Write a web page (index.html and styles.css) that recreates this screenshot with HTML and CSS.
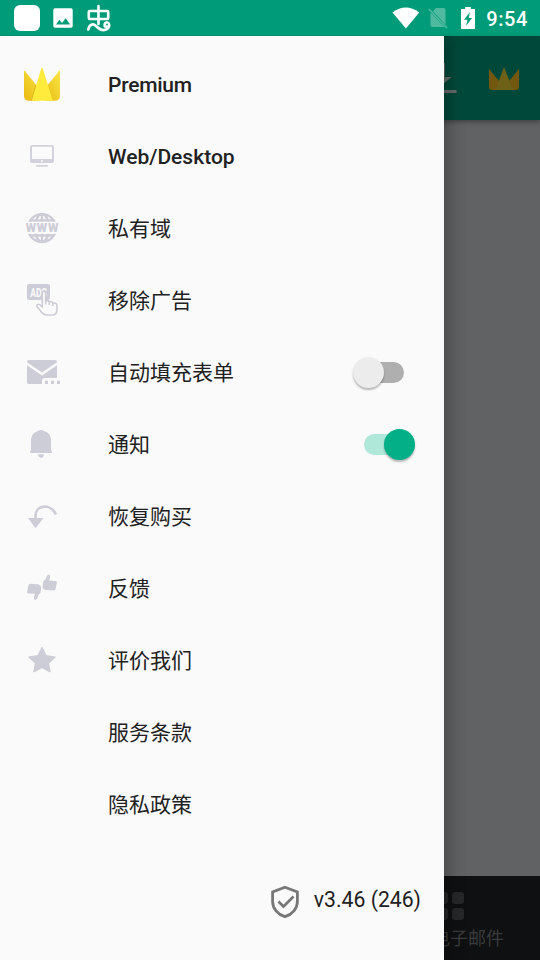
FILE: index.html
```html
<!DOCTYPE html>
<html lang="zh-CN">
<head>
<meta charset="utf-8">
<title>Menu</title>
<link rel="stylesheet" href="styles.css">
</head>
<body>
<div class="screen">
  <header class="status">
    <div class="status-left">
      <span class="app-tile"></span>
      <svg class="st-photo" width="20" height="20" viewBox="0 0 20 20"><path fill="#fff" fill-rule="evenodd" d="M2 .3h16q1.700 0 1.700 1.700v16q0 1.700-1.700 1.700H2Q.3 19.700.3 18V2Q.3.300 2 .3ZM3 16.500h14.300l-4.700-6.300-3.600 4.700-2.600-3.100Z"/></svg>
      <svg class="st-bug" width="26" height="28" viewBox="0 0 26 28"><g fill="none" stroke="#fff" stroke-width="2.600" stroke-linecap="round" stroke-linejoin="round"><path d="M12.500 2v18M3.800 7h17.400q1 0 1 1v6q0 1-1 1H3.800q-1 0-1-1v-6q0-1 1-1Z"/><path d="M2.300 25.500c1-5 4.700-6.500 7.700-3.500s7 5.500 11 3.200c3.500-2 2.600-7-1-6.500"/></g><circle cx="20.500" cy="21" r="3.200" fill="#fff"/><circle cx="21" cy="20.500" r="0.900" fill="#009c79"/></svg>
    </div>
    <div class="status-right">
      <svg width="28" height="22" viewBox="0 0 28 22"><path fill="#fff" d="M.5 5.400Q13.800-4.300 27.200 5.400L13.900 21.500Z"/></svg>
      <svg class="st-sim" width="20" height="22" viewBox="0 0 20 22"><path fill="#50baa1" d="M8 1h7.500q2 0 2 2v14.800L5 4.200ZM2.500 5.500 16.500 20H4.500q-2 0-2-2Z"/><path d="M.8 2 19 21" stroke="#50baa1" stroke-width="1.700"/></svg>
      <svg class="st-batt" width="14" height="22" viewBox="0 0 14 22"><path fill="#fff" d="M4.200 0h5.600v2H14v20H0V2h4.200Z"/><path fill="#009c79" d="M9 5 3 12.800h3.500L5 19l6-8H7.700Z"/></svg>
      <span class="clock">9:54</span>
    </div>
  </header>

  <main class="app">
    <div class="toolbar">
      <svg class="download" width="32" height="32" viewBox="0 0 32 32"><path fill="#676b69" d="M11.500 1h8.400v14H26.500L16 24 5.500 15h6ZM0 28h31q.7 0 .7.800v1.400q0 .8-.7.800H0Z"/></svg>
      <svg class="mini-crown" width="30" height="23" viewBox="0 0 30 23"><path fill="#72570f" d="M0 2 10 14 20 14 30 2V20q0 3-3 3H3q-3 0-3-3Z"/><path fill="#6c6117" d="M15 0 24 23H6.500Z"/></svg>
    </div>
    <div class="content"></div>
    <nav class="tabs">
      <div class="tab">
        <div class="tiles"><i></i><i></i><i></i><i></i></div>
        <span>电子邮件</span>
      </div>
    </nav>
  </main>

  <aside class="drawer">
    <ul class="menu">
      <li>
        <svg class="icon" viewBox="0 0 48 48"><defs><linearGradient id="gl" x1="0" y1="1" x2="0.700" y2="0"><stop offset="0" stop-color="#e9b90f"/><stop offset="1" stop-color="#f6dc3b"/></linearGradient><linearGradient id="gr" x1="0" y1="1" x2="1" y2="0"><stop offset="0" stop-color="#e8bb15"/><stop offset="1" stop-color="#fbe643"/></linearGradient></defs><path fill="url(#gl)" d="M6 11.500q0-1.300 1-.3L20 27v13.700H11q-5 0-5-5Z"/><path fill="url(#gr)" d="M42 11.500q0-1.300-1-.3L28 27v13.700h9q5 0 5-5Z"/><path fill="#c79c12" d="M17.700 25 20 27 14.500 40.700h-1.200Z"/><path fill="#ffeb3b" d="M23.200 8.600q.8-1.200 1.600 0L34.800 40.700H13.600Z"/></svg>
        <span class="strong tight">Premium</span>
      </li>
      <li>
        <svg class="icon" viewBox="0 0 48 48"><path fill="#d2d2dc" fill-rule="evenodd" d="M14 13h20q2 0 2 2v14q0 2-2 2H14q-2 0-2-2V15q0-2 2-2Zm0 1.800V27h20V14.800ZM24 28a1 1 0 1 0 .01 0ZM18.800 33h10.400q.8 0 .8.900t-.8.900H18.800q-.8 0-.8-.9t.8-.9Z"/></svg>
        <span class="strong">Web/Desktop</span>
      </li>
      <li>
        <svg class="icon" viewBox="0 0 48 48"><g fill="none" stroke="#cdcdd8" stroke-width="2.400"><circle cx="24" cy="24" r="13.900"/><ellipse cx="24" cy="24" rx="7" ry="14"/><path d="M24 10v28M12.500 16.500h23M12.500 31.500h23"/></g><path fill="#fafafa" d="M6 17.800h36v11.900H6Z"/><text class="www" x="7.700" y="27.800" textLength="32.700" lengthAdjust="spacing">WWW</text></svg>
        <span>私有域</span>
      </li>
      <li>
        <svg class="icon" viewBox="0 0 48 48"><rect x="9" y="8" width="23" height="16" rx="2" fill="#cdcdd8"/><text class="ads" x="12.300" y="20.600" textLength="16.600" lengthAdjust="spacingAndGlyphs">ADS</text><path fill="#fafafa" stroke="#cdcdd8" stroke-width="1.600" stroke-linejoin="round" d="M24.300 31V17q0-1.800 1.700-1.800t1.700 1.800V25q2.800-1 3.600.8 2.700-.9 3.500 1.200 4-.5 4.100 2.500v4.500q0 5-5 5h-5q-3.500 0-5.300-2.700L19 30.500q-.7-1.600.8-2.100 1.800-.5 3 1.300ZM27.700 25v3.500M31.300 26v3M34.800 27v3"/></svg>
        <span>移除广告</span>
      </li>
      <li>
        <svg class="icon" viewBox="0 0 48 48"><path fill="#cdcdd8" d="M11 12h26q2 0 2 2v.3L24 24.400 9 14.300V14q0-2 2-2ZM9 17.300 24 27.400 39 17.300V30H27q-3 0-3 3v3H11q-2 0-2-2ZM27 32.800h3V36h-3ZM33 32.800h3V36h-3ZM39 32.800h3V36h-3Z"/></svg>
        <span>自动填充表单</span>
        <div class="switch"><b></b></div>
      </li>
      <li>
        <svg class="icon" viewBox="0 0 48 48"><path fill="#cdcdd8" d="M13 30V20Q13.500 12.500 20 11q3-1.800 6 0 6.500 1.500 7 9v10l1 1.500q.3 1.500-1.500 1.500h-19q-1.800 0-1.500-1.500ZM20 34.300h6q-.4 3.400-3 3.400t-3-3.400Z"/></svg>
        <span>通知</span>
        <div class="switch on"><b></b></div>
      </li>
      <li>
        <svg class="icon" viewBox="0 0 48 48"><path fill="#cdcdd8" d="M10 26h15.400L17.700 36.200Z"/><path fill="none" stroke="#cdcdd8" stroke-width="2.600" d="M17.500 27v-3C17.500 12.500 32.500 11 38 22.500"/></svg>
        <span>恢复购买</span>
      </li>
      <li>
        <svg class="icon" viewBox="0 0 48 48"><path fill="#cdcdd8" d="M12.500 19.800 20 20.200q3 1.300 3.200 2.800l-.6 5.500q-2.600 2.500-3.700 6.300-1.300 1.800-2.700.8-.8-2.100.7-5.800l-6.700-.2q-1.300-.4-1.100-1.700l1.300-6.500q.3-1.600 2.100-1.600ZM35.700 26.600 27.500 26q-2.800-1-3-2.500l.6-5.800q3-2.400 4-6 1.200-1.700 2.700-.7.800 2-.5 5.400l6.500.5q1.300.4 1.100 1.700l-1.300 6.500q-.3 1.500-1.900 1.500Z"/></svg>
        <span>反馈</span>
      </li>
      <li>
        <svg class="icon" viewBox="0 0 48 48"><path fill="#cdcdd8" stroke="#cdcdd8" stroke-width="1.400" stroke-linejoin="round" d="m24 11.500 4 8.300 9 1.300-6.600 6.200 1.600 8.400-8-4.200-8 4.200 1.600-8.400L11 21.100l9-1.300Z"/></svg>
        <span>评价我们</span>
      </li>
      <li><i class="icon"></i><span>服务条款</span></li>
      <li><i class="icon"></i><span>隐私政策</span></li>
    </ul>
    <footer class="version">
      <svg width="28" height="34" viewBox="0 0 28 34"><g fill="none" stroke="#777" stroke-width="2.800"><path d="M14 2.300 26.400 7v9.500c0 7-5 12.800-12.400 15.200C6.600 29.300 1.600 23.500 1.600 16.500V7Z"/><path d="m7.500 16.500 5 5L22.500 11.500"/></g></svg>
      <span>v3.46 (246)</span>
    </footer>
  </aside>
</div>
</body>
</html>
```
FILE: styles.css
```css
* { box-sizing: border-box; }
body { margin: 0; font-family: Roboto, "Noto Sans CJK SC", sans-serif; }
svg { display: block; flex: none; }
.screen {
  position: relative;
  width: 540px;
  height: 960px;
  display: flex;
  flex-direction: column;
  overflow: hidden;
}
.status {
  height: 36px;
  flex: none;
  display: flex;
  justify-content: space-between;
  align-items: center;
  padding: 0 12px 0 14px;
  background: #009c79;
}
.status-left, .status-right { display: flex; align-items: center; }
.app-tile { width: 26px; height: 26px; border-radius: 6px; background: #fff; }
.st-photo { margin-left: 13px; }
.st-bug { margin-left: 13px; }
.st-sim { margin-left: 8px; }
.st-batt { margin: 0 11px 1px 13px; }
.clock {
  color: #fff;
  font-size: 20px;
  font-weight: 500;
  letter-spacing: 0.6px;
  line-height: 36px;
  padding-top: 1px;
}
.app { flex: 1; display: flex; flex-direction: column; background: #616264; }
.toolbar {
  height: 84px;
  display: flex;
  justify-content: flex-end;
  align-items: center;
  padding-right: 21px;
  background: #00493a;
  box-shadow: 0 2px 5px rgba(0, 0, 0, 0.35);
}
.download { margin-right: 32px; }
.mini-crown { margin-top: 1px; }
.content { flex: 1; }
.tabs {
  height: 84px;
  display: flex;
  justify-content: flex-end;
  padding-right: 36px;
  background: #0f1011;
}
.tab { display: flex; flex-direction: column; align-items: flex-start; padding-top: 16px; }
.tiles { display: grid; grid-template-columns: 12px 12px; gap: 4px; margin-left: 4px; }
.tiles i { height: 12px; border-radius: 3px; background: #252728; }
.tab span { margin-top: 7px; font-size: 18px; line-height: 24px; color: #393b3c; }
.drawer {
  position: absolute;
  left: 0;
  top: 36px;
  bottom: 0;
  width: 444px;
  display: flex;
  flex-direction: column;
  padding-top: 12px;
  background: #fafafa;
  box-shadow: 4px 0 16px rgba(0, 0, 0, 0.3);
  clip-path: inset(0 -30px 0 0);
}
.menu { list-style: none; margin: 0; padding: 0; }
.menu li {
  height: 72px;
  display: flex;
  align-items: center;
  padding: 0 29px 0 18px;
  font-size: 21px;
  color: #212121;
}
.menu span { flex: 1; line-height: 30px; padding-top: 1px; }
.menu .strong { font-weight: 500; }
.menu .tight { letter-spacing: -0.25px; }
.icon { width: 48px; height: 48px; margin-right: 42px; flex: none; }
.www { font: 900 12px Roboto, sans-serif; fill: #cdcdd8; }
.ads { font: 700 12px Roboto, sans-serif; fill: #fafafa; }
.switch {
  width: 40px;
  height: 21px;
  display: flex;
  align-items: center;
  margin-right: 11px;
  border-radius: 11px;
  background: #afafaf;
}
.switch b {
  width: 31px;
  height: 31px;
  flex: none;
  margin-left: -11px;
  border-radius: 50%;
  background: #ececec;
  box-shadow: 0 2px 2px rgba(0, 0, 0, 0.27);
}
.switch.on { background: #afe7d9; }
.switch.on b { margin-left: 20px; background: #02af87; }
.version {
  display: flex;
  align-items: center;
  justify-content: flex-end;
  gap: 15px;
  height: 34px;
  margin-top: 45px;
  padding-right: 23px;
  font-size: 21.2px;
  color: #212121;
}
.version span { line-height: 30px; margin-top: -4px; }
```
